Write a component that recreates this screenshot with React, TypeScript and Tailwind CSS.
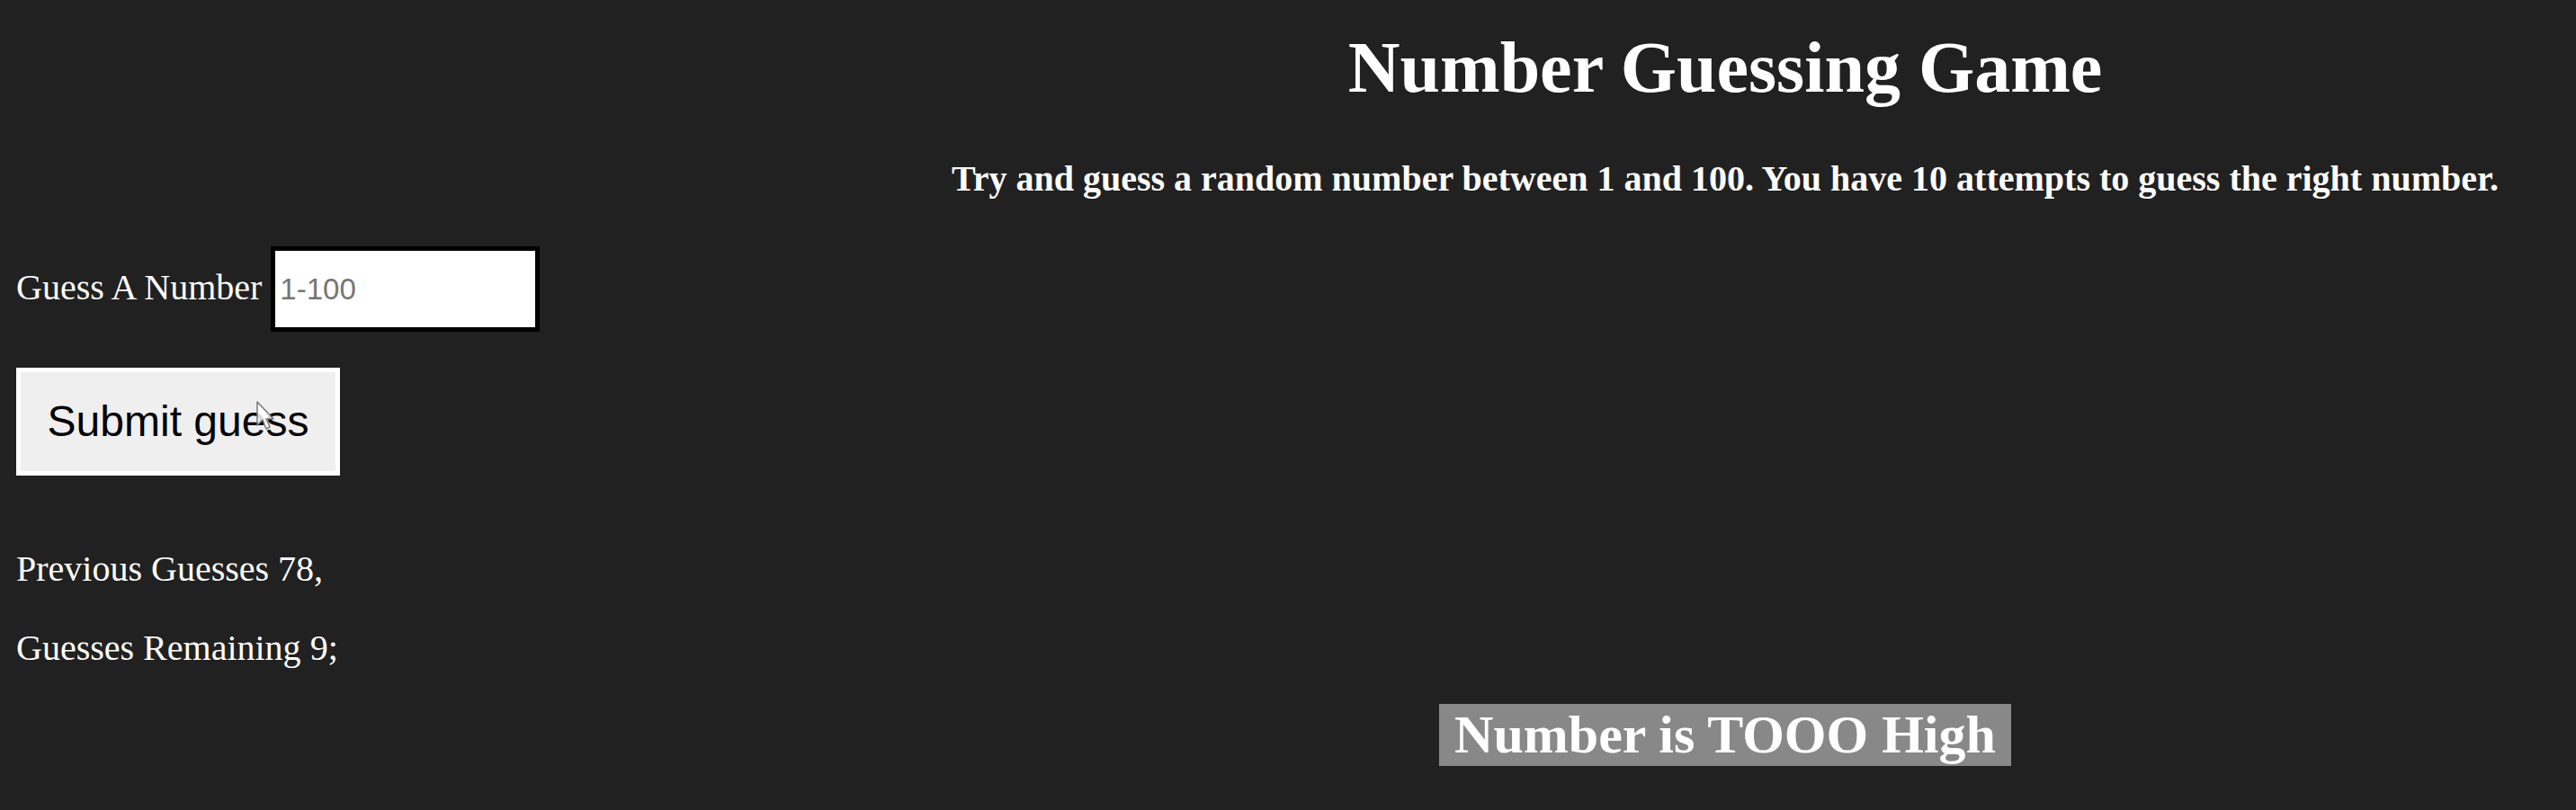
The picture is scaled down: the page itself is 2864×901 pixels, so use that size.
import { useState } from "react";

// Number guessing game — static snapshot after one guess (78, too high)

const serif = "font-['Liberation_Serif','Times_New_Roman',serif]";
const sans = "font-['Liberation_Sans',Arial,sans-serif]";

export default function App() {
  const [guess, setGuess] = useState("");
  const previous = [78];
  const remaining = 10 - previous.length;

  return (
    <div className={`relative flex min-h-[901px] w-full bg-[#212121] text-white ${serif}`}>
      {/* ── Left: form ── */}
      <div className="w-[972px] shrink-0 pl-[18px] pt-[274px]">
        <div className="flex items-baseline gap-[10px]">
          <label htmlFor="guessField" className="text-[40px] leading-[46px]">
            Guess A Number
          </label>
          <input
            id="guessField"
            type="text"
            placeholder="1-100"
            value={guess}
            onChange={(e) => setGuess(e.target.value)}
            className={`h-[95px] w-[299px] border-[5px] border-black bg-white px-[5px] text-[33px] text-black placeholder:text-[#757575] outline-none ${sans}`}
          />
        </div>

        <button
          className={`mt-[40px] flex h-[120px] w-[360px] items-center justify-center border-[5px] border-white bg-[#efefef] text-[48px] leading-none text-black ${sans}`}
        >
          Submit guess
        </button>

        <p className="mt-[81px] text-[40px] leading-[46px]">Previous Guesses {previous.join(", ")},</p>
        <p className="mt-[42px] text-[40px] leading-[46px]">Guesses Remaining {remaining};</p>
      </div>

      {/* ── Right: heading + result ── */}
      <div className="flex-1 pt-[29px] text-center">
        <h1 className="text-[80px] font-bold leading-[92px]">Number Guessing Game</h1>
        <h4 className="mt-[55px] text-[40px] font-bold leading-[46px]">
          Try and guess a random number between 1 and 100. You have 10 attempts to guess the right number.
        </h4>
        <div className="mt-[561px]">
          <h2 className="inline-block bg-[#888888] px-[17px] text-[60px] font-bold leading-[69px]">
            Number is TOOO High
          </h2>
        </div>
      </div>

      {/* mouse pointer over the button */}
      <svg
        className="pointer-events-none absolute left-[285px] top-[446px]"
        width="22"
        height="34"
        viewBox="0 0 22 34"
      >
        <path
          d="M1 1 L1 27 L7 21 L11 31 L15 29 L11 20 L19 20 Z"
          fill="rgba(255,255,255,0.85)"
          stroke="#777"
          strokeWidth="1.5"
          strokeLinejoin="round"
        />
      </svg>
    </div>
  );
}
